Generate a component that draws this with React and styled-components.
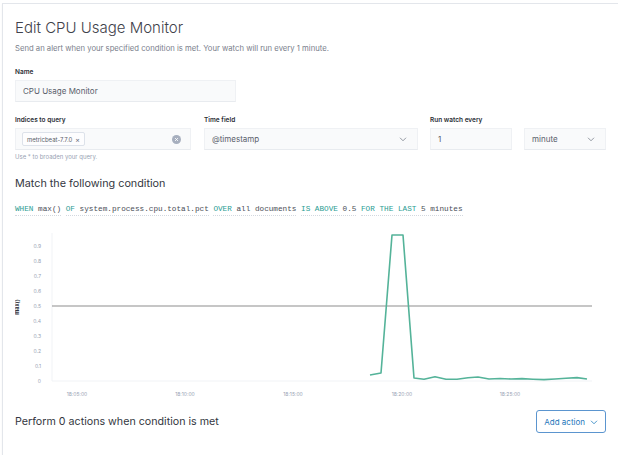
import React from 'react';
import styled, { createGlobalStyle } from 'styled-components';

const GlobalStyle = createGlobalStyle`
  html, body {
    margin: 0;
    padding: 0;
    background: #fff;
    overflow: hidden;
  }
  body {
    font-family: Inter, "Noto Sans", sans-serif;
    color: #343741;
  }
`;

const series = [
  [370, 374], [381, 372], [392, 234], [403, 234], [414, 377], [424, 378.3],
  [435, 375.7], [446, 378.3], [457, 378.3], [468, 376.7], [478, 376],
  [489, 378], [500, 377.5], [511, 378], [522, 377.6], [533, 378.2],
  [544, 378.6], [555, 378], [566, 377.2], [577, 376.6], [587, 378],
];

const yTicks = [0, 0.1, 0.2, 0.3, 0.4, 0.5, 0.6, 0.7, 0.8, 0.9];
const xTicks = [
  [77, '18:05:00'], [185, '18:10:00'], [293, '18:15:00'], [402, '18:20:00'], [510, '18:25:00'],
];

const expression = [
  ['WHEN', 'max()'],
  ['OF', 'system.process.cpu.total.pct'],
  ['OVER', 'all documents'],
  ['IS ABOVE', '0.5'],
  ['FOR THE LAST', '5 minutes'],
];

const Chevron = ({ color = '#69707d' }) => (
  <svg width="8" height="8" viewBox="0 0 16 16">
    <path d="M2 5.5l6 6 6-6" fill="none" stroke={color} strokeWidth="1.4" />
  </svg>
);

const App = () => {
  return (
    <>
      <GlobalStyle />
      <Panel>
        <Content>
          <Title>Edit CPU Usage Monitor</Title>
          <Subtitle>
            Send an alert when your specified condition is met. Your watch will run every 1 minute.
          </Subtitle>

          <Field $top={15} $width={221}>
            <Label>Name</Label>
            <Input>CPU Usage Monitor</Input>
          </Field>

          <Row>
            <Field $width={176}>
              <Label>Indices to query</Label>
              <Input>
                <Badge>
                  metricbeat-7.7.0 <span>×</span>
                </Badge>
                <ClearIcon>
                  <svg width="9" height="9" viewBox="0 0 16 16">
                    <circle cx="8" cy="8" r="8" fill="#a7afbe" />
                    <path d="M5.5 5.5l5 5M10.5 5.5l-5 5" stroke="#fff" strokeWidth="1.6" />
                  </svg>
                </ClearIcon>
              </Input>
              <Help>Use * to broaden your query.</Help>
            </Field>
            <Field $width={214}>
              <Label>Time field</Label>
              <Input>
                @timestamp
                <Chevron />
              </Input>
            </Field>
            <Field $width={176}>
              <Label>Run watch every</Label>
              <Pair>
                <Input>1</Input>
                <Input>
                  minute
                  <Chevron />
                </Input>
              </Pair>
            </Field>
          </Row>

          <SectionTitle>Match the following condition</SectionTitle>
          <ExpressionRow>
            {expression.map(([kw, val]) => (
              <Expr key={kw}>
                <Keyword>{kw}</Keyword> {val}
              </Expr>
            ))}
          </ExpressionRow>

          <Chart width="591" height="172" viewBox="15 228 591 172">
            <line x1="52" y1="232" x2="52" y2="380" stroke="#f1f3f6" />
            <line x1="52" y1="380" x2="592" y2="380" stroke="#f1f3f6" />
            <text
              x="19"
              y="306"
              transform="rotate(-90 19 306)"
              textAnchor="middle"
              fontSize="5.5"
              fontWeight="700"
              fill="#343741"
            >
              max()
            </text>
            {yTicks.map((v) => (
              <text key={v} x="41" y={380 - v * 150 + 2} textAnchor="end" fontSize="5" fill="#98a2b3">
                {v === 0 ? '0' : v.toFixed(1)}
              </text>
            ))}
            {xTicks.map(([x, t]) => (
              <text key={t} x={x} y="395" textAnchor="middle" fontSize="5" fill="#98a2b3">
                {t}
              </text>
            ))}
            <line x1="52" y1="305" x2="592" y2="305" stroke="#8d8d8d" strokeWidth="1" />
            <polyline
              points={series.map((p) => p.join(',')).join(' ')}
              fill="none"
              stroke="#54b399"
              strokeWidth="1.6"
              strokeLinejoin="round"
            />
          </Chart>

          <Footer>
            <FooterTitle>Perform 0 actions when condition is met</FooterTitle>
            <AddButton>
              Add action
              <Chevron color="#006bb4" />
            </AddButton>
          </Footer>
        </Content>
      </Panel>
    </>
  );
};

export default App;

const Panel = styled.div`
  margin: 3px 0 0 2px;
  width: 640px;
  height: 452px;
  border-left: 1px solid #e3e6eb;
  border-top: 1px solid #e3e6eb;
  box-shadow: 0 1px 2px rgba(0, 0, 0, 0.04);
  box-sizing: border-box;
  padding: 13px 0 0 12px;
`;

const Content = styled.div`
  width: 591px;
  display: flex;
  flex-direction: column;
`;

const Title = styled.h1`
  margin: 0;
  font-size: 15px;
  line-height: 22px;
  font-weight: 300;
  color: #3f424b;
`;

const Subtitle = styled.p`
  margin: 5px 0 0;
  font-size: 7.7px;
  line-height: 9px;
  color: #7a808c;
`;

const Row = styled.div`
  display: flex;
  gap: 13px;
  margin-top: 14px;
  & > div:nth-child(3) {
    margin-left: -1px;
  }
`;

const Field = styled.div`
  display: flex;
  flex-direction: column;
  width: ${(p) => p.$width}px;
  margin-top: ${(p) => p.$top || 0}px;
`;

const Label = styled.label`
  font-size: 6.5px;
  line-height: 8px;
  font-weight: 600;
  color: #2b2e35;
  margin-bottom: 4px;
`;

const Input = styled.div`
  height: 22px;
  flex: none;
  box-sizing: border-box;
  display: flex;
  align-items: center;
  justify-content: space-between;
  padding: 0 10px 0 7px;
  background: #f9fafb;
  border: 1px solid #eff1f4;
  border-bottom-color: #e8ebef;
  font-size: 8px;
  color: #5a606b;
`;

const Pair = styled.div`
  display: flex;
  gap: 12px;
  & > div {
    width: 82px;
  }
`;

const Badge = styled.span`
  display: inline-flex;
  align-items: center;
  gap: 3px;
  height: 12px;
  padding: 0 4px;
  margin-left: -1px;
  border: 1px solid #dde2ea;
  border-radius: 2px;
  background: #fdfdfe;
  font-size: 6px;
  color: #5a606b;
  span {
    color: #69707d;
    font-size: 7px;
  }
`;

const ClearIcon = styled.span`
  display: flex;
  margin-right: -1px;
`;

const Help = styled.div`
  margin-top: 3px;
  font-size: 6px;
  line-height: 8px;
  color: #98a2b3;
`;

const SectionTitle = styled.h2`
  margin: 16px 0 0;
  font-size: 10.8px;
  line-height: 14px;
  font-weight: 400;
  color: #343741;
`;

const ExpressionRow = styled.div`
  display: flex;
  gap: 4.6px;
  margin-top: 12px;
  font-family: "Liberation Mono", "DejaVu Sans Mono", monospace;
  font-size: 7.7px;
  line-height: 12px;
  color: #4a4e57;
`;

const Expr = styled.span`
  white-space: pre;
  border-bottom: 1px dotted #d3d8df;
`;

const Keyword = styled.span`
  color: #2a9d93;
`;

const Chart = styled.svg`
  display: block;
  margin-top: 13px;
  font-family: Inter, sans-serif;
`;

const Footer = styled.div`
  display: flex;
  align-items: center;
  justify-content: space-between;
  margin-top: 9px;
`;

const FooterTitle = styled.h3`
  margin: 0;
  font-size: 10.7px;
  font-weight: 400;
  color: #343741;
`;

const AddButton = styled.button`
  display: flex;
  align-items: center;
  gap: 5px;
  height: 23px;
  padding: 0 7px;
  background: #fff;
  border: 1px solid #5b95cf;
  border-radius: 3px;
  font-family: Inter, sans-serif;
  font-size: 8px;
  color: #1f77bb;
`;
